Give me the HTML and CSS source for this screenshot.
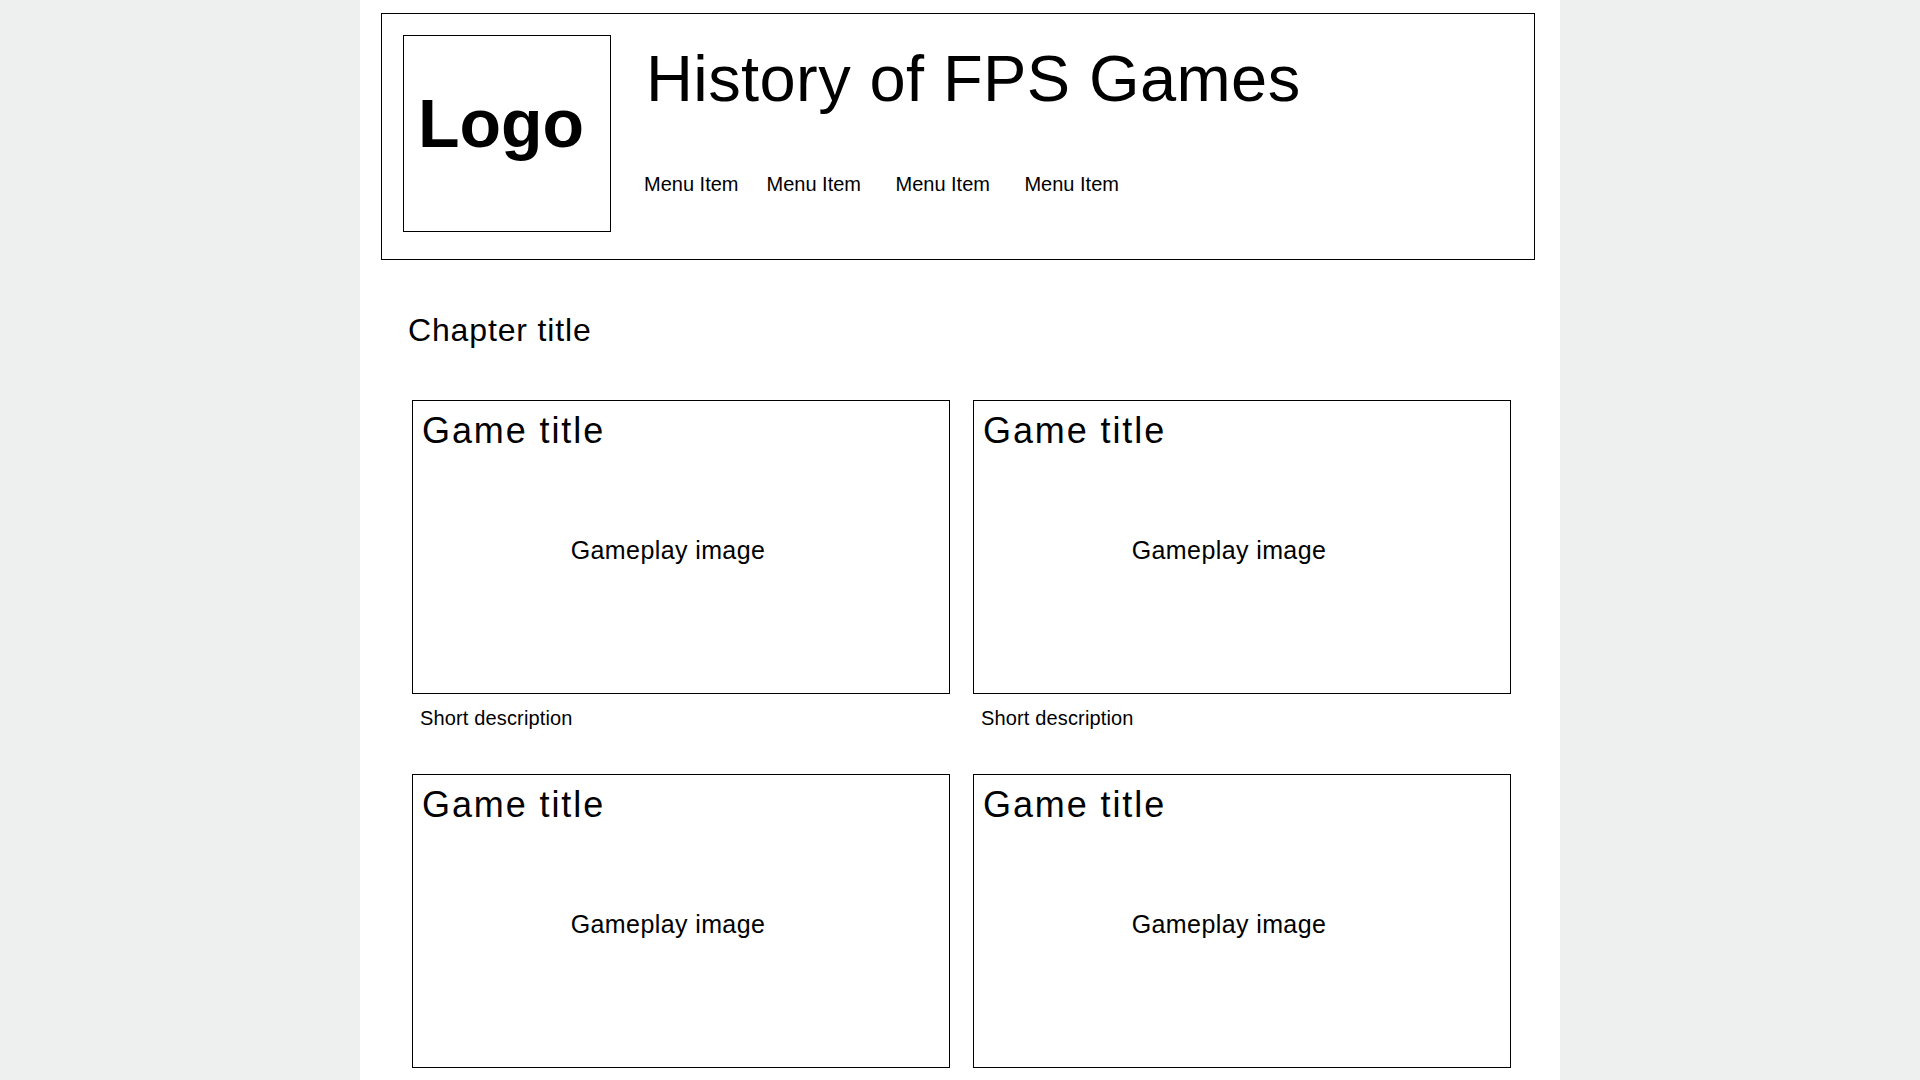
FILE: index.html
```html
<!DOCTYPE html>
<html lang="en">
<head>
<meta charset="utf-8">
<title>History of FPS Games</title>
<link rel="stylesheet" href="styles.css">
</head>
<body>
<div class="page">
  <header class="site-header">
    <div class="logo">Logo</div>
    <div class="header-main">
      <h1 class="site-title">History of FPS Games</h1>
      <nav class="menu">
        <a class="menu-item">Menu Item</a>
        <a class="menu-item">Menu Item</a>
        <a class="menu-item">Menu Item</a>
        <a class="menu-item">Menu Item</a>
      </nav>
    </div>
  </header>
  <main class="chapter">
    <h2 class="chapter-title">Chapter title</h2>
    <div class="game-grid">
      <article class="game">
        <div class="game-card">
          <div class="game-image">Gameplay image</div>
          <h3 class="game-title">Game title</h3>
        </div>
        <p class="game-desc">Short description</p>
      </article>
      <article class="game">
        <div class="game-card">
          <div class="game-image">Gameplay image</div>
          <h3 class="game-title">Game title</h3>
        </div>
        <p class="game-desc">Short description</p>
      </article>
      <article class="game">
        <div class="game-card">
          <div class="game-image">Gameplay image</div>
          <h3 class="game-title">Game title</h3>
        </div>
        <p class="game-desc">Short description</p>
      </article>
      <article class="game">
        <div class="game-card">
          <div class="game-image">Gameplay image</div>
          <h3 class="game-title">Game title</h3>
        </div>
        <p class="game-desc">Short description</p>
      </article>
    </div>
  </main>
</div>
</body>
</html>
```

FILE: styles.css
```css
html, body {
  margin: 0;
  padding: 0;
}

body {
  background: #eef0ef;
  font-family: "Liberation Sans", Arial, sans-serif;
  color: #000;
}

.page {
  box-sizing: border-box;
  width: 1200px;
  min-height: 100vh;
  margin: 0 auto;
  padding-top: 13px;
  background: #fff;
}

/* Header */
.site-header {
  box-sizing: border-box;
  display: flex;
  align-items: flex-start;
  width: 1154px;
  height: 247px;
  margin-left: 21px;
  padding: 21px 0 0 21px;
  border: 1px solid #000;
}

.logo {
  box-sizing: border-box;
  flex: none;
  width: 208px;
  height: 197px;
  padding: 47px 0 0 14px;
  border: 1px solid #000;
  font-size: 68px;
  line-height: 80px;
  font-weight: 700;
}

.header-main {
  display: flex;
  flex-direction: column;
  margin-left: 35px;
}

.site-title {
  margin: 6px 0 0;
  font-size: 65px;
  line-height: 75px;
  font-weight: 400;
  letter-spacing: 0.4px;
  white-space: nowrap;
}

.menu {
  display: flex;
  margin: 56px 0 0 -2px;
}

.menu-item {
  margin-right: 34.5px;
  font-size: 20px;
  line-height: 24px;
  color: #000;
  text-decoration: none;
  white-space: nowrap;
}

.menu-item:first-child {
  margin-right: 28px;
}

/* Chapter */
.chapter {
  padding-bottom: 40px;
}

.chapter-title {
  margin: 51px 0 0 48px;
  font-size: 32px;
  line-height: 38px;
  font-weight: 400;
  letter-spacing: 0.85px;
}

.game-grid {
  display: grid;
  grid-template-columns: 538px 538px;
  column-gap: 23px;
  row-gap: 44px;
  margin: 51px 0 0 52px;
}

.game-card {
  position: relative;
  box-sizing: border-box;
  display: flex;
  height: 294px;
  border: 1px solid #000;
}

.game-image {
  flex: 1;
  display: flex;
  align-items: center;
  justify-content: center;
  padding: 5px 26px 0 0;
  font-size: 25px;
  line-height: 30px;
  letter-spacing: 0.4px;
}

.game-title {
  position: absolute;
  top: 10px;
  left: 9px;
  margin: 0;
  font-size: 36px;
  line-height: 40px;
  font-weight: 400;
  letter-spacing: 1.9px;
}

.game-desc {
  margin: 12px 0 0;
  padding-left: 8px;
  font-size: 20px;
  line-height: 24px;
  letter-spacing: 0.15px;
}
```
